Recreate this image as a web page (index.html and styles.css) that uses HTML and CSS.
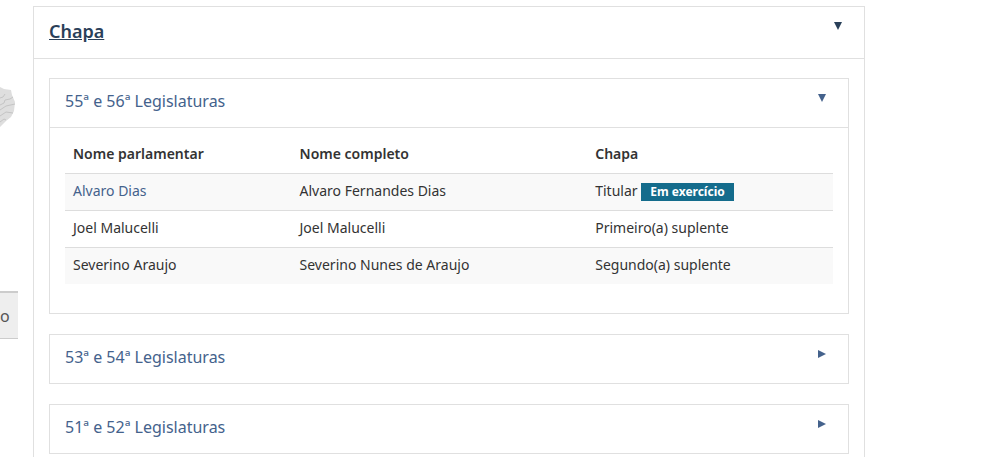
FILE: index.html
```html
<!DOCTYPE html>
<html lang="pt-br">
<head>
    <meta charset="UTF-8">
    <meta name="viewport" content="width=device-width, initial-scale=1.0">
    <title>Chapa</title>
    <link rel="stylesheet" href="styles.css">
</head>
<body>
    <div class="page">
        <aside class="sidebar">
            <svg class="map" viewBox="0 0 18 42" aria-hidden="true">
                <path d="M0 1 L4 3 L11 4 L12 9 L15 16 L14 25 L11 31 L6 35 L0 41 Z" fill="#dedede"/>
                <path d="M0 12 L3 11 L5 8 M0 19 L4 17 L5 14 L10 13 L13 11 M0 24 L6 20 L15 18 M0 30 L6 26 L13 27 M0 36 L4 33 L6 34" fill="none" stroke="#c4c4c4" stroke-width="1"/>
            </svg>
            <button type="button" class="side-tab">o</button>
        </aside>

        <main class="content">
            <details class="accordion" open>
                <summary class="accordion-heading main-heading">
                    <h2>Chapa</h2>
                    <svg class="arrow" viewBox="0 0 8 8" aria-hidden="true"><path d="M0 0 L8 4 L0 8 Z"/></svg>
                </summary>
                <div class="accordion-list">
                    <details class="accordion" open>
                        <summary class="accordion-heading">
                            <h3>55ª e 56ª Legislaturas</h3>
                            <svg class="arrow" viewBox="0 0 8 8" aria-hidden="true"><path d="M0 0 L8 4 L0 8 Z"/></svg>
                        </summary>
                        <div class="accordion-body">
                            <table class="table">
                                <thead>
                                    <tr>
                                        <th class="col-nome">Nome parlamentar</th>
                                        <th class="col-completo">Nome completo</th>
                                        <th>Chapa</th>
                                    </tr>
                                </thead>
                                <tbody>
                                    <tr>
                                        <td><a href="#">Alvaro Dias</a></td>
                                        <td>Alvaro Fernandes Dias</td>
                                        <td>Titular <span class="label">Em exercício</span></td>
                                    </tr>
                                    <tr>
                                        <td>Joel Malucelli</td>
                                        <td>Joel Malucelli</td>
                                        <td>Primeiro(a) suplente</td>
                                    </tr>
                                    <tr>
                                        <td>Severino Araujo</td>
                                        <td>Severino Nunes de Araujo</td>
                                        <td>Segundo(a) suplente</td>
                                    </tr>
                                </tbody>
                            </table>
                        </div>
                    </details>

                    <details class="accordion">
                        <summary class="accordion-heading">
                            <h3>53ª e 54ª Legislaturas</h3>
                            <svg class="arrow" viewBox="0 0 8 8" aria-hidden="true"><path d="M0 0 L8 4 L0 8 Z"/></svg>
                        </summary>
                    </details>

                    <details class="accordion">
                        <summary class="accordion-heading">
                            <h3>51ª e 52ª Legislaturas</h3>
                            <svg class="arrow" viewBox="0 0 8 8" aria-hidden="true"><path d="M0 0 L8 4 L0 8 Z"/></svg>
                        </summary>
                    </details>
                </div>
            </details>
        </main>
    </div>
</body>
</html>
```
FILE: styles.css
```css
* {
    box-sizing: border-box;
}
html {
    scrollbar-width: none;
}
body {
    margin: 0;
    background: #fff;
    color: #333;
    font-family: "Noto Sans", "Open Sans", sans-serif;
    font-size: 14px;
    line-height: 20px;
}
a {
    color: #44628c;
    text-decoration: none;
}
a:hover {
    text-decoration: underline;
}
.page {
    display: flex;
    gap: 15px;
    padding-right: 122px;
}

/* Sidebar */
.sidebar {
    flex: 0 0 18px;
    overflow: hidden;
    padding-top: 86px;
}
.map {
    display: block;
    width: 18px;
    height: 42px;
}
.side-tab {
    display: block;
    width: 100%;
    height: 48px;
    margin-top: 163px;
    padding: 0;
    border: 0;
    border-top: 2px solid #ccc;
    border-bottom: 1px solid #ccc;
    background: #eee;
    color: #555;
    font: inherit;
    font-size: 16px;
    text-align: left;
}

/* Accordions */
.content {
    flex: 1;
    min-width: 0;
    padding-top: 6px;
}
.accordion {
    border: 1px solid #e0e0e0;
}
.accordion-list {
    display: flex;
    flex-direction: column;
    gap: 20px;
    padding: 19px 15px;
    border-top: 1px solid #e0e0e0;
}
.accordion-heading {
    display: flex;
    justify-content: space-between;
    align-items: flex-start;
    padding: 15px 22px 15px 15px;
    color: #44628c;
    cursor: pointer;
    list-style: none;
}
.accordion-heading h2,
.accordion-heading h3 {
    margin: 0;
}
.accordion-heading h3 {
    padding-bottom: 4px;
    font-size: 16px;
    font-weight: 400;
    line-height: 14px;
}
.main-heading {
    color: #2a4059;
}
.main-heading h2 {
    padding-bottom: 2px;
    font-size: 18px;
    font-weight: 600;
    line-height: 19px;
    text-decoration: underline;
}
.arrow {
    width: 8px;
    height: 8px;
    fill: currentColor;
}
.accordion[open] > .accordion-heading .arrow {
    transform: rotate(90deg);
}
.accordion-body {
    padding: 9px 15px 29px;
    border-top: 1px solid #e0e0e0;
}

/* Table */
.table {
    width: 100%;
    table-layout: fixed;
    border-spacing: 0;
}
.table th,
.table td {
    padding: 7px 8px 9px;
    text-align: left;
}
.table th {
    font-weight: 600;
}
.table td {
    border-top: 1px solid #ddd;
}
.table tbody tr:nth-child(odd) {
    background: #f9f9f9;
}
.col-nome {
    width: 29.5%;
}
.col-completo {
    width: 38.5%;
}
.label {
    display: inline-block;
    margin-top: 2px;
    padding: 0 9px;
    background: #146c8c;
    color: #fff;
    font-size: 12px;
    font-weight: 700;
    line-height: 18px;
    vertical-align: top;
}
```
